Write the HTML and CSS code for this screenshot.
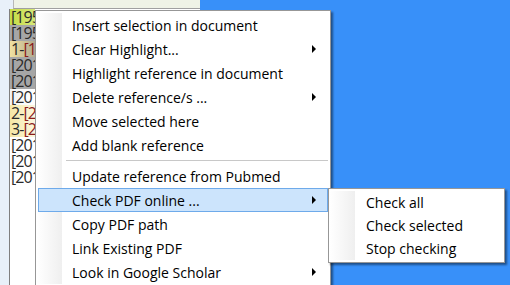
FILE: index.html
```html
<!DOCTYPE html>
<html lang="en">
  <head>
    <meta charset="UTF-8" />
    <title>Reference context menu</title>
    <link rel="stylesheet" href="styles.css">
  </head>
  <body>
    <div class="window">
      <div class="toolbar"></div>
      <div class="ref-box">
        <div class="ref-row lime">[1959</div>
        <div class="ref-row grey">[1959</div>
        <div class="ref-row tan">1-<span class="mark">[1</span></div>
        <div class="ref-row grey">[201</div>
        <div class="ref-row grey">[201</div>
        <div class="ref-row plain">[201</div>
        <div class="ref-row cream">2-<span class="mark">[2</span></div>
        <div class="ref-row cream">3-<span class="mark">[2</span></div>
        <div class="ref-row">[201</div>
        <div class="ref-row">[201</div>
        <div class="ref-row">[201</div>
      </div>
    </div>

    <!-- context menu -->
    <div class="menu main-menu">
      <div class="menu-item">Insert selection in document</div>
      <div class="menu-item">Clear Highlight... <span class="arrow"></span></div>
      <div class="menu-item">Highlight reference in document</div>
      <div class="menu-item">Delete reference/s ... <span class="arrow"></span></div>
      <div class="menu-item">Move selected here</div>
      <div class="menu-item">Add blank reference</div>
      <div class="menu-sep"></div>
      <div class="menu-item">Update reference from Pubmed</div>
      <div class="menu-item active">Check PDF online ... <span class="arrow"></span></div>
      <div class="menu-item">Copy PDF path</div>
      <div class="menu-item">Link Existing PDF</div>
      <div class="menu-item">Look in Google Scholar <span class="arrow"></span></div>
    </div>

    <!-- submenu -->
    <div class="menu sub-menu">
      <div class="menu-item">Check all</div>
      <div class="menu-item">Check selected</div>
      <div class="menu-item">Stop checking</div>
    </div>
  </body>
</html>
```

FILE: styles.css
```css
body {
  margin: 0;
  width: 510px;
  height: 285px;
  overflow: hidden;
  position: relative;
  background-color: #3890f9;
  font-family: "Open Sans", "Noto Sans", sans-serif;
  font-size: 14px;
  color: #000;
}

/* window behind the menu */
.window {
  width: 200px;
  height: 285px;
  background-color: #e8f0f9;
}

.toolbar {
  height: 8px;
  margin-left: 13px;
  background-color: #eff3e6;
  border-left: 1px solid #b8b8b8;
  border-bottom: 1px solid #a0a0a0;
}

.ref-box {
  margin-left: 9px;
  height: 276px;
  background: white;
  border-left: 1px solid #7f7f7f;
}

.ref-row {
  width: 24px;
  height: 16px;
  line-height: 16px;
  padding-left: 1px;
  font-size: 16px;
  letter-spacing: -0.9px;
  color: #2a2a2a;
  white-space: nowrap;
  overflow: hidden;
}

.ref-row .mark {
  color: #8a1c1c;
}

.ref-row.lime {
  background: linear-gradient(to right, #c6dc44, #d6e87a);
}

.ref-row.grey {
  background-color: #a6a6a6;
}

.ref-row.tan {
  background: linear-gradient(to right, #f2e2a0, #b0a890);
}

.ref-row.plain {
  background: linear-gradient(to right, #f4f4f4, #ffffff);
}

.ref-row.cream {
  background: linear-gradient(to right, #f6e7a4, #fbf6e0);
}

/* menus */
.menu {
  position: absolute;
  background-color: white;
  border: 1px solid #979797;
  padding: 2px;
  box-shadow: 2px 2px 2px rgba(0, 0, 0, 0.45);
}

.menu::before {
  content: "";
  position: absolute;
  top: 2px;
  bottom: 2px;
  left: 1px;
  width: 25px;
  background: linear-gradient(to right, #ffffff, #efefef);
}

.main-menu {
  left: 35px;
  top: 10px;
  width: 290px;
}

.sub-menu {
  left: 328px;
  top: 188px;
  width: 171px;
}

.menu-item {
  position: relative;
  display: flex;
  align-items: center;
  height: 24px;
  padding-left: 33px;
  border: 1px solid transparent;
  box-sizing: border-box;
  white-space: nowrap;
}

.sub-menu .menu-item {
  height: 23px;
  padding-left: 34px;
}

.menu-item.active {
  background-color: #cce4fc;
  border-color: #6eaaea;
}

.arrow {
  margin-left: auto;
  margin-right: 11px;
  width: 0;
  height: 0;
  border-left: 4px solid #000;
  border-top: 4px solid transparent;
  border-bottom: 4px solid transparent;
}

.menu-sep {
  position: relative;
  height: 7px;
}

.menu-sep::after {
  content: "";
  position: absolute;
  left: 28px;
  right: 0;
  top: 3px;
  border-top: 1px solid #c8c8c8;
}
```
